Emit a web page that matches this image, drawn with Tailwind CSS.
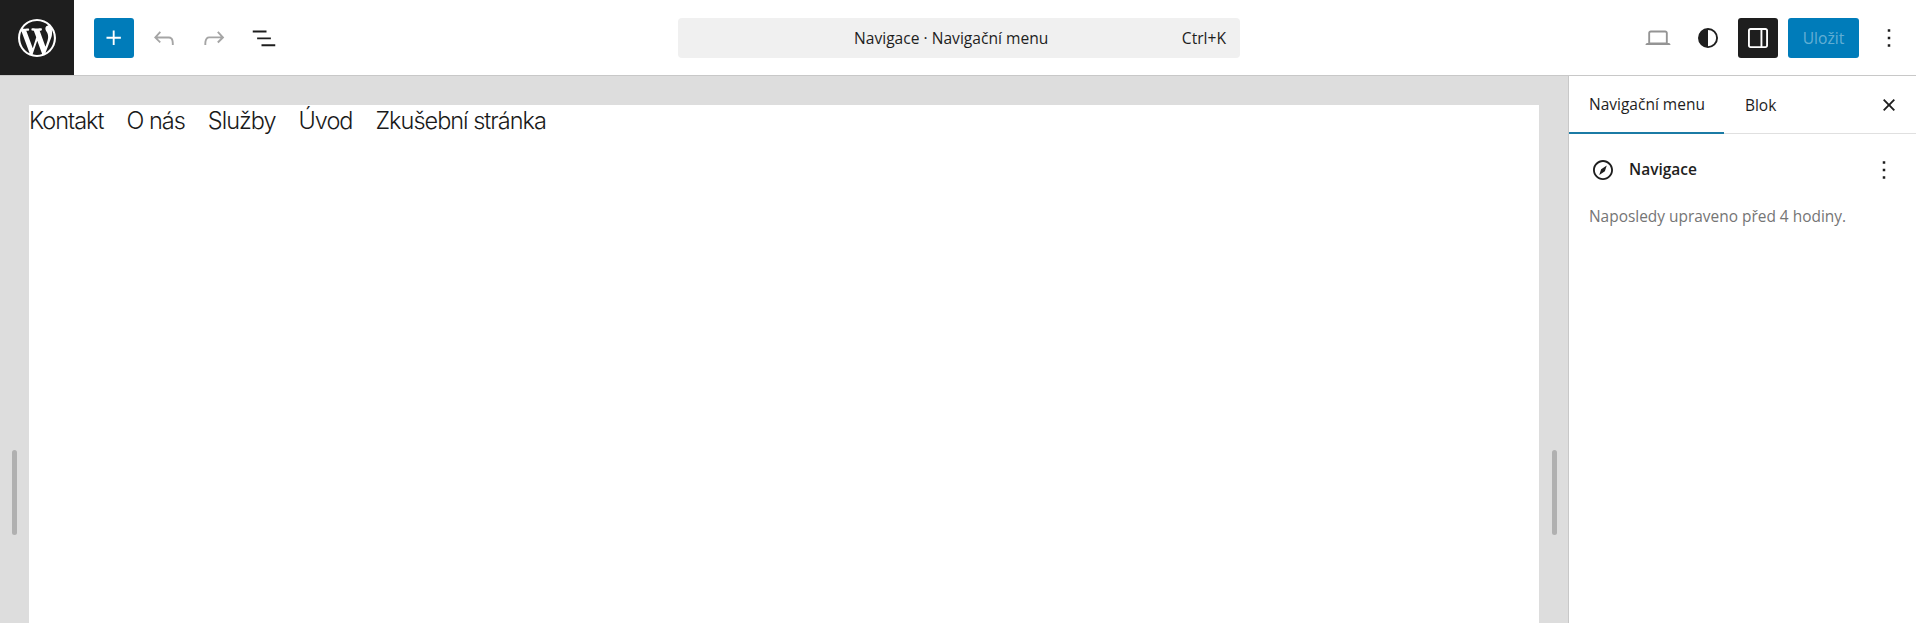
<!DOCTYPE html>
<html lang="cs">
<head>
    <meta charset="UTF-8">
    <title>Navigace · Navigační menu</title>
    <script src="https://cdn.jsdelivr.net/npm/@tailwindcss/browser@4"></script>
</head>
<body class="h-[623px] overflow-hidden bg-white text-[#1e1e1e] font-['Open_Sans','Noto_Sans',sans-serif]">
    <!-- top bar -->
    <header class="flex items-center h-[76px] border-b border-[#c8c8c8] bg-white">
        <div class="flex items-center w-[678px] h-full">
            <a class="flex items-center justify-center w-[74px] h-full bg-[#1e1e1e]">
                <svg class="w-[38px] h-[38px] fill-white" viewBox="0 0 20 20"><path d="M20 10c0-5.51-4.49-10-10-10C4.48 0 0 4.49 0 10c0 5.52 4.48 10 10 10 5.51 0 10-4.48 10-10zM7.78 15.37L4.37 6.22c.55-.02 1.17-.08 1.17-.08.5-.06.44-1.13-.06-1.11 0 0-1.45.11-2.37.11-.18 0-.37 0-.58-.01C4.12 2.69 6.87 1.11 10 1.11c2.33 0 4.45.87 6.05 2.34-.68-.11-1.65.39-1.65 1.58 0 .74.45 1.36.9 2.1.35.61.55 1.36.55 2.46 0 1.49-1.4 5-1.4 5l-3.03-8.37c.54-.02.82-.17.82-.17.5-.05.44-1.25-.06-1.22 0 0-1.44.12-2.38.12-.87 0-2.33-.12-2.33-.12-.5-.03-.56 1.2-.06 1.22l.92.08 1.26 3.41zM17.41 10c.24-.64.74-1.87.43-4.25.7 1.29 1.05 2.71 1.05 4.25 0 3.29-1.73 6.24-4.4 7.78.97-2.59 1.94-5.2 2.92-7.78zM6.1 18.09C3.12 16.65 1.11 13.53 1.11 10c0-1.3.23-2.48.72-3.59C3.25 10.3 4.67 14.2 6.1 18.09zm4.03-6.63l2.58 6.98c-.86.29-1.76.45-2.71.45-.79 0-1.57-.11-2.29-.33.81-2.38 1.62-4.74 2.42-7.1z"/></svg>
            </a>
            <div class="flex items-center gap-[10px] ml-5">
                <button class="flex items-center justify-center w-10 h-10 rounded-[3px] bg-[#007cba]">
                    <svg class="w-[30px] h-[30px] fill-white" viewBox="0 0 24 24"><path d="M11 12.5V17.5H12.5V12.5H17.5V11H12.5V6H11V11H6V12.5H11Z"/></svg>
                </button>
                <button class="flex items-center justify-center w-10 h-10">
                    <svg class="w-[30px] h-[30px] fill-[#a5a5a5]" viewBox="0 0 24 24"><path d="M18.3 11.7c-.6-.6-1.4-.9-2.3-.9H6.7l2.9-3.3-1.1-1-4.5 5L8.5 16l1-1-2.7-2.7H16c.5 0 .9.2 1.3.5 1 1 1 3.4 1 4.5v.3h1.5v-.2c0-1.5 0-4.3-1.5-5.7z"/></svg>
                </button>
                <button class="flex items-center justify-center w-10 h-10">
                    <svg class="w-[30px] h-[30px] fill-[#a5a5a5]" viewBox="0 0 24 24"><path d="M15.6 6.5l-1.1 1 2.9 3.3H8c-.9 0-1.7.3-2.3.9-1.4 1.5-1.4 4.2-1.4 5.6v.2h1.5v-.3c0-1.1 0-3.5 1-4.5.3-.3.7-.5 1.3-.5h9.2L14.5 15l1.1 1.1 4.6-4.6-4.6-5z"/></svg>
                </button>
                <button class="flex items-center justify-center w-10 h-10">
                    <svg class="w-[30px] h-[30px] fill-[#1e1e1e]" viewBox="0 0 24 24"><path d="M3 6h11v1.5H3V6Zm3.5 5.5h11V13h-11v-1.5ZM21 17H10v1.5h11V17Z"/></svg>
                </button>
            </div>
        </div>

        <div class="flex items-center w-[562px] h-10 pt-[2px] pl-[176px] pr-[14px] rounded-[4px] bg-[#f0f0f0] text-[15.6px] whitespace-nowrap">
            <span>Navigace · Navigační menu</span>
            <span class="ml-auto">Ctrl+K</span>
        </div>

        <div class="flex items-center justify-end flex-1 h-full gap-[10px] pr-[7px]">
            <button class="flex items-center justify-center w-10 h-10">
                <svg class="w-[30px] h-[30px] fill-[#949494]" viewBox="0 0 24 24"><path d="M20.5 16h-.7V8c0-1.1-.9-2-2-2H6.2c-1.1 0-2 .9-2 2v8h-.7c-.8 0-1.5.7-1.5 1.5h20c0-.8-.7-1.5-1.5-1.5zM5.7 8c0-.3.2-.5.5-.5h11.6c.3 0 .5.2.5.5v7.6H5.7V8z"/></svg>
            </button>
            <button class="flex items-center justify-center w-10 h-10">
                <svg class="w-[30px] h-[30px] fill-[#1e1e1e]" viewBox="0 0 24 24"><path fill-rule="evenodd" d="M20 12a8 8 0 1 1-16 0 8 8 0 0 1 16 0Zm-1.5 0a6.5 6.5 0 0 1-6.5 6.5v-13a6.5 6.5 0 0 1 6.5 6.5Z"/></svg>
            </button>
            <button class="flex items-center justify-center w-10 h-10 rounded-[3px] bg-[#1e1e1e]">
                <svg class="w-[30px] h-[30px] fill-white" viewBox="0 0 24 24"><path d="M18 4H6c-1.1 0-2 .9-2 2v12c0 1.1.9 2 2 2h12c1.1 0 2-.9 2-2V6c0-1.1-.9-2-2-2zm-4 14.5H6c-.3 0-.5-.2-.5-.5V6c0-.3.2-.5.5-.5h8v13zm4.5-.5c0 .3-.2.5-.5.5h-2.5v-13H18c.3 0 .5.2.5.5v12z"/></svg>
            </button>
            <button class="flex items-center justify-center w-[71px] h-10 pt-[2px] rounded-[3px] bg-[#007cba] text-[15.6px] text-white/40">Uložit</button>
            <button class="flex items-center justify-center w-10 h-10">
                <svg class="w-[30px] h-[30px] fill-[#1e1e1e]" viewBox="0 0 24 24"><path d="M13 19h-2v-2h2v2zm0-6h-2v-2h2v2zm0-6h-2V5h2v2z"/></svg>
            </button>
        </div>
    </header>

    <div class="flex h-[547px]">
        <!-- canvas -->
        <main class="relative flex-1 px-[29px] pt-[29px] bg-[#dddddd]">
            <nav class="flex gap-[23px] h-full bg-white text-[23.5px] leading-[32px] font-light tracking-[-1px] text-[#1a1a1a] font-['Inter',sans-serif]">
                <a>Kontakt</a>
                <a>O nás</a>
                <a>Služby</a>
                <a>Úvod</a>
                <a>Zkušební stránka</a>
            </nav>
            <div class="absolute left-[12px] top-[374px] w-[5px] h-[85px] rounded-full bg-[#b0b0b0]"></div>
            <div class="absolute right-[11px] top-[374px] w-[5px] h-[85px] rounded-full bg-[#b0b0b0]"></div>
        </main>

        <!-- settings sidebar -->
        <aside class="w-[348px] border-l border-[#c8c8c8] bg-white">
            <div class="flex items-center h-[58px] border-b border-[#e0e0e0] text-[15.5px]">
                <div class="flex items-center h-full pt-[2px] pl-5 pr-[19px] border-b-2 -mb-px border-[#1b7ba5]">Navigační menu</div>
                <div class="ml-[21px] pt-[2px]">Blok</div>
                <button class="flex items-center justify-center w-10 h-10 ml-auto mr-[7px]">
                    <svg class="w-[30px] h-[30px] fill-[#1e1e1e]" viewBox="0 0 24 24"><path d="M12 13.06l3.712 3.713 1.061-1.06L13.061 12l3.712-3.712-1.06-1.06L12 10.938 8.288 7.227l-1.061 1.06L10.939 12l-3.712 3.712 1.06 1.061L12 13.061z"/></svg>
                </button>
            </div>
            <div class="px-5 pt-4">
                <div class="flex items-center h-10">
                    <svg class="w-[30px] h-[30px] -ml-[1px] fill-[#1e1e1e]" viewBox="0 0 24 24"><path d="M12 4c-4.4 0-8 3.6-8 8s3.6 8 8 8 8-3.6 8-8-3.6-8-8-8zm0 14.5c-3.6 0-6.5-2.9-6.5-6.5S8.4 5.5 12 5.5s6.5 2.9 6.5 6.5-2.9 6.5-6.5 6.5zM9 16l4.5-3L15 8.4l-4.5 3L9 16z"/></svg>
                    <span class="ml-[11px] text-[15.5px] font-semibold">Navigace</span>
                    <svg class="w-[30px] h-[30px] ml-auto -mr-[3px] fill-[#1e1e1e]" viewBox="0 0 24 24"><path d="M13 19h-2v-2h2v2zm0-6h-2v-2h2v2zm0-6h-2V5h2v2z"/></svg>
                </div>
                <p class="mt-[14px] text-[15.45px] leading-[24px] text-[#757575]">Naposledy upraveno před 4 hodiny.</p>
            </div>
        </aside>
    </div>
</body>
</html>
